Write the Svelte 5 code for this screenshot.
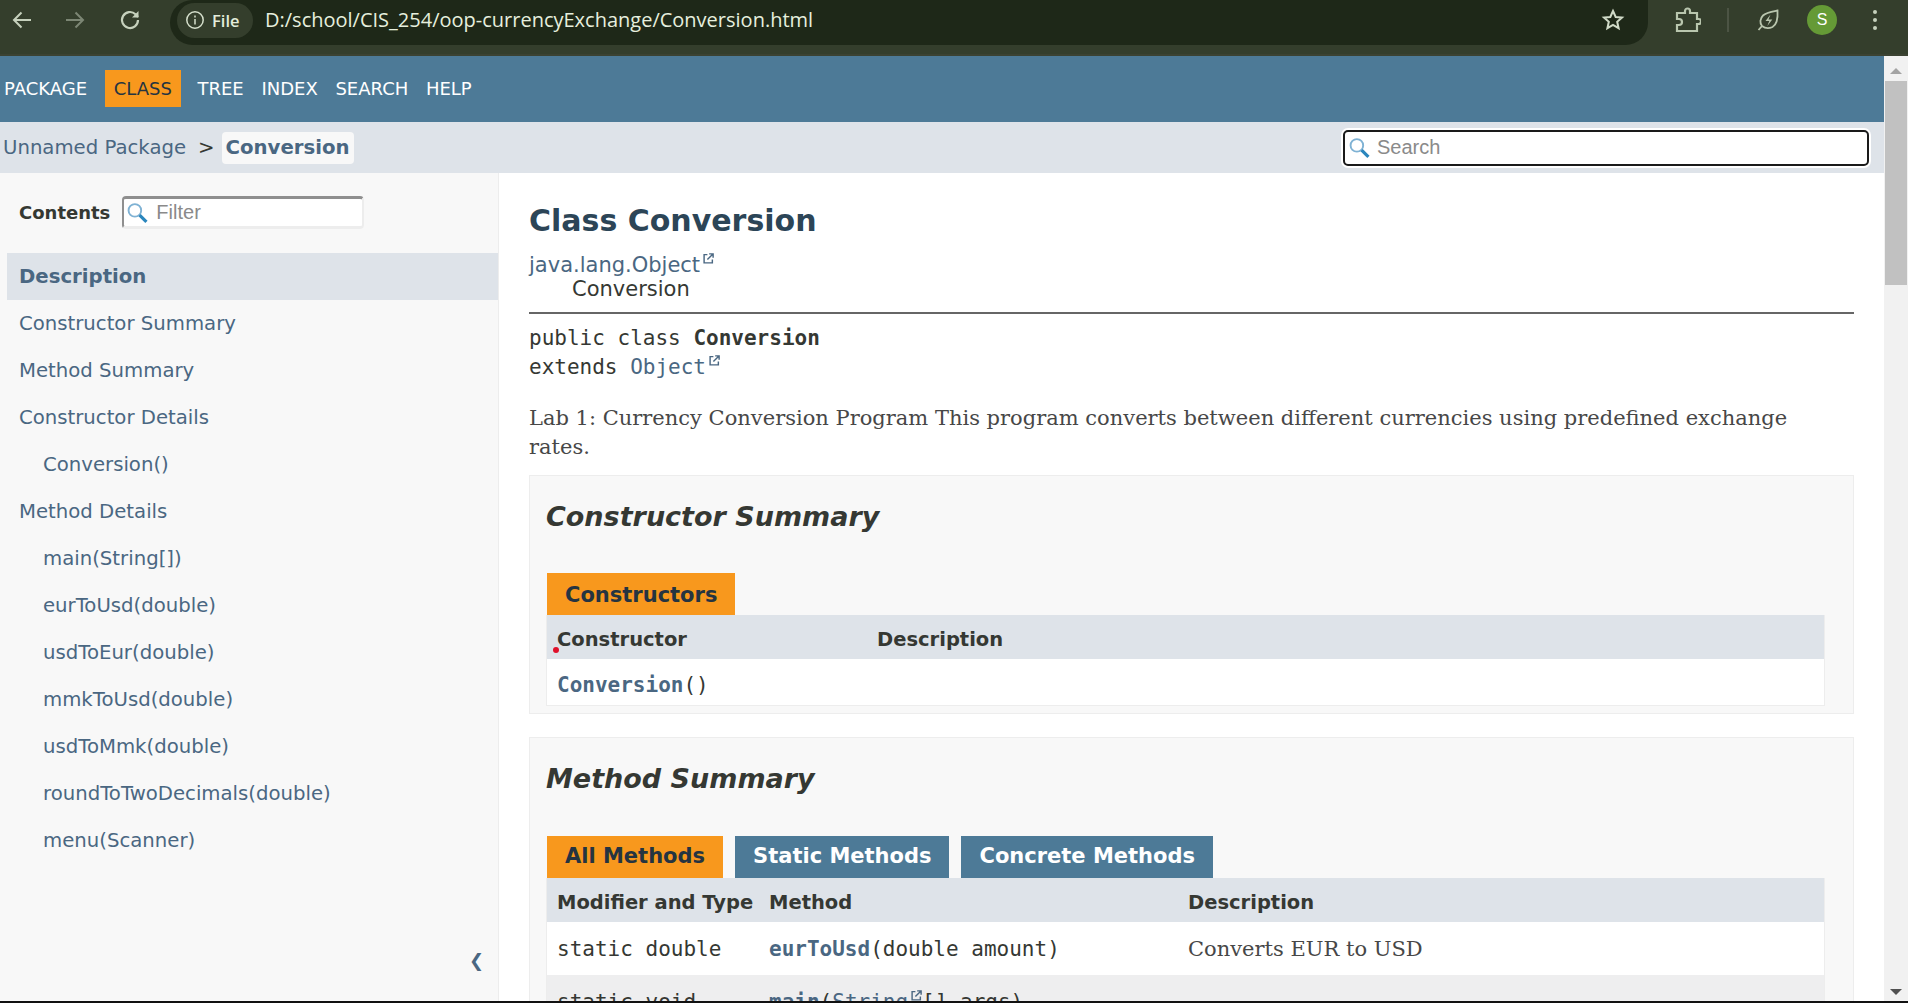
<script>
  const navItems = ['PACKAGE', 'CLASS', 'TREE', 'INDEX', 'SEARCH', 'HELP'];
  const toc = [
    { label: 'Description', active: true },
    { label: 'Constructor Summary' },
    { label: 'Method Summary' },
    { label: 'Constructor Details' },
    { label: 'Conversion()', sub: true },
    { label: 'Method Details' },
    { label: 'main(String[])', sub: true },
    { label: 'eurToUsd(double)', sub: true },
    { label: 'usdToEur(double)', sub: true },
    { label: 'mmkToUsd(double)', sub: true },
    { label: 'usdToMmk(double)', sub: true },
    { label: 'roundToTwoDecimals(double)', sub: true },
    { label: 'menu(Scanner)', sub: true },
  ];
</script>

{#snippet glass()}
  <svg class="glass" viewBox="0 0 20 20" width="21" height="21" fill="none">
    <circle cx="7.500" cy="7.500" r="6" stroke="#7fb2d4" stroke-width="1.800" fill="#fff" />
    <path d="M12 12l6.500 6.500" stroke="#2a86bd" stroke-width="3" />
  </svg>
{/snippet}

{#snippet ext()}
  <svg class="ext" viewBox="0 0 10 10" width="11" height="11" fill="none" stroke="#4a6782" stroke-width="1.300">
    <path d="M4 1.500H1v7.500h7.500V6" />
    <path d="M4 6l4.600-4.600M5.600 .8h3.600v3.600" />
  </svg>
{/snippet}

<div class="shot">
  <header class="chrome">
    <div class="chrome-nav">
      <svg viewBox="0 0 24 24" width="24" height="24" fill="none" stroke="#c6d1bd" stroke-width="2"><path d="M21 12H4.500M11.500 4.500L4 12l7.500 7.500" /></svg>
      <svg viewBox="0 0 24 24" width="24" height="24" fill="none" stroke="#7c8674" stroke-width="2"><path d="M3 12h16.500M12.500 4.500L20 12l-7.500 7.500" /></svg>
      <svg class="reload" viewBox="0 0 24 24" width="24" height="24" fill="none" stroke="#c6d1bd" stroke-width="2.200"><path d="M20 12a8 8 0 1 1-2.500-5.800L20 9" /><path d="M20.500 3V9.500H14" fill="#c6d1bd" stroke="none" /></svg>
    </div>
    <div class="omnibox">
      <div class="chip">
        <svg viewBox="0 0 20 20" width="20" height="20" fill="none" stroke="#d5dfcc" stroke-width="1.500"><circle cx="10" cy="10" r="8.200" /><path d="M10 9v5.500M10 5.400v2" /></svg>
        <span>File</span>
      </div>
      <span class="url">D:/school/CIS_254/oop-currencyExchange/Conversion.html</span>
      <svg class="star" viewBox="0 0 24 24" width="24" height="24" fill="none" stroke="#d0dac7" stroke-width="2"><path d="M12 3l2.700 6 6.300.6-4.800 4.200 1.400 6.400L12 16.900l-5.600 3.300 1.400-6.400L3 9.600 9.300 9z" /></svg>
    </div>
    <div class="chrome-tools">
      <svg viewBox="0 0 26 28" width="26" height="28" fill="none" stroke="#b9c6ae" stroke-width="2.200"><path d="M2 7h8V5a2.500 2.500 0 0 1 5 0v2h7v6h1.500a2.500 2.500 0 0 1 0 5H22v7H2v-6h2a3 3 0 0 0 0-6H2z" /></svg>
      <span class="tool-sep"></span>
      <svg class="leaf" viewBox="0 0 24 24" width="24" height="24" fill="none" stroke="#b9c6ae" stroke-width="1.800"><path d="M21.500 2.500c.5 7.500 0 13.500-5 16.500-4 2-8 1-10.500-1-2.500-3-2-7.500 1-10.500 3-3 9.500-4 14.500-5zM2.500 22l3.500-4" /><path d="M14.500 6.500l-5 6.500h3.800l-2 5 5-6.500h-3.800z" fill="#b9c6ae" stroke="none" /></svg>
      <span class="avatar">S</span>
      <svg class="dots" viewBox="0 0 6 24" width="6" height="24" fill="#c6d1bd"><circle cx="3" cy="4" r="2" /><circle cx="3" cy="12" r="2" /><circle cx="3" cy="20" r="2" /></svg>
    </div>
  </header>

  <div class="viewport">
    <div class="page">
      <nav class="topnav">
        {#each navItems as item}
          <span class:current={item === 'CLASS'}>{item}</span>
        {/each}
      </nav>

      <div class="subnav">
        <div class="crumbs">
          <span class="crumb">Unnamed Package</span>
          <span class="crumb-sep">&gt;</span>
          <span class="crumb-current">Conversion</span>
        </div>
        <div class="search-wrap">
          {@render glass()}
          <input class="search" placeholder="Search" />
        </div>
      </div>

      <div class="body">
        <aside class="sidebar">
          <div class="contents-head">
            <b>Contents</b>
            <div class="filter-wrap">
              {@render glass()}
              <input class="filter" placeholder="Filter" />
            </div>
          </div>
          <ul class="toc">
            {#each toc as row}
              <li class:active={row.active} class:sub={row.sub}>{row.label}</li>
            {/each}
          </ul>
          <span class="collapse">❮</span>
        </aside>

        <main class="main">
          <h1>Class Conversion</h1>
          <div class="inherit">
            <div><span class="link">java.lang.Object</span>{@render ext()}</div>
            <div class="inherit-child">Conversion</div>
          </div>
          <hr />
          <div class="sig">
            <div>public class <b>Conversion</b></div>
            <div>extends <span class="link">Object</span>{@render ext()}</div>
          </div>
          <p class="lede">Lab 1: Currency Conversion Program This program converts between different currencies using predefined exchange rates.</p>

          <section class="summary ctor">
            <h2>Constructor Summary</h2>
            <div class="tabs">
              <span class="tab on">Constructors</span>
            </div>
            <div class="table">
              <div class="row head ctor-cols">
                <span>Constructor</span>
                <span>Description</span>
              </div>
              <div class="row ctor-cols">
                <code><b class="link">Conversion</b>()</code>
                <span></span>
              </div>
            </div>
            <i class="red-dot"></i>
          </section>

          <section class="summary methods">
            <h2>Method Summary</h2>
            <div class="tabs">
              <span class="tab on">All Methods</span>
              <span class="tab">Static Methods</span>
              <span class="tab">Concrete Methods</span>
            </div>
            <div class="table">
              <div class="row head method-cols">
                <span>Modifier and Type</span>
                <span>Method</span>
                <span>Description</span>
              </div>
              <div class="row tall method-cols">
                <code>static double</code>
                <code><b class="link">eurToUsd</b>(double amount)</code>
                <span class="desc">Converts EUR to USD</span>
              </div>
              <div class="row tall alt method-cols">
                <code>static void</code>
                <code><b class="link">main</b>(<span class="link">String</span>{@render ext()}[] args)</code>
                <span class="desc"></span>
              </div>
            </div>
          </section>
        </main>
      </div>
    </div>

    <div class="scrollbar">
      <span class="arrow up"></span>
      <span class="thumb"></span>
      <span class="arrow down"></span>
    </div>
  </div>
  <div class="edge"></div>
</div>

<style>
  :global(body) {
    margin: 0;
    background: #fff;
  }

  .shot {
    width: 1908px;
    height: 1003px;
    display: flex;
    flex-direction: column;
    overflow: hidden;
    font-family: "DejaVu Sans", sans-serif;
    font-size: 21px;
    color: #353833;
  }

  /* browser toolbar */
  .chrome {
    height: 54px;
    flex: none;
    display: flex;
    align-items: flex-start;
    background: #343e2c;
    border-bottom: 2px solid #3b4232;
  }
  .chrome-nav {
    display: flex;
    gap: 29px;
    padding: 8px 0 0 10px;
    width: 170px;
    box-sizing: border-box;
  }
  .reload {
    margin-left: 2px;
  }
  .omnibox {
    width: 1478px;
    height: 45px;
    background: #1e2818;
    border-radius: 24px;
    border-top-right-radius: 0;
    display: flex;
    align-items: center;
    padding: 0 0 5px 7px;
    box-sizing: border-box;
    position: relative;
    color: #e3ecda;
  }
  .chip {
    display: flex;
    align-items: center;
    gap: 7px;
    height: 35px;
    width: 76px;
    padding-left: 8px;
    box-sizing: border-box;
    background: #343e2c;
    border-radius: 18px;
    font: 600 16.500px "Open Sans", sans-serif;
    color: #e3ecda;
  }
  .url {
    margin: 0 0 2px 12px;
    font: 20px "Open Sans", sans-serif;
    color: #e6efde;
  }
  .star {
    position: absolute;
    right: 23px;
    top: 8px;
  }
  .chrome-tools {
    display: flex;
    align-items: center;
    height: 40px;
    padding-left: 27px;
  }
  .tool-sep {
    width: 2px;
    height: 24px;
    margin: 0 27px 0 26px;
    background: #4c5444;
  }
  .avatar {
    width: 30px;
    height: 30px;
    margin-left: 27px;
    border-radius: 50%;
    background: #659a36;
    color: #fff;
    display: flex;
    align-items: center;
    justify-content: center;
    font: 16px "Liberation Sans", sans-serif;
  }
  .dots {
    margin-left: 35px;
  }

  .viewport {
    flex: 1;
    min-height: 0;
    display: flex;
  }
  .page {
    flex: 1;
    min-width: 0;
    display: flex;
    flex-direction: column;
  }

  /* javadoc nav */
  .topnav {
    height: 66px;
    flex: none;
    display: flex;
    align-items: center;
    background: #4d7a97;
    color: #fff;
    font-size: 18px;
    padding: 0 0 2px 4px;
    box-sizing: border-box;
  }
  .topnav span {
    margin-right: 17.700px;
  }
  .topnav .current {
    background: #f8981d;
    color: #253441;
    padding: 8px 9px;
    margin: 0 16.500px 0 0;
  }

  .subnav {
    height: 51px;
    flex: none;
    display: flex;
    align-items: center;
    justify-content: space-between;
    background: #dee3e9;
    padding: 0 14px 0 3px;
    font-size: 19.700px;
  }
  .crumbs {
    display: flex;
    align-items: center;
  }
  .crumb {
    color: #4a6782;
  }
  .crumb-sep {
    margin: 0 7px 0 12px;
    color: #353833;
  }
  .crumb-current {
    color: #4a6782;
    font-weight: 700;
    background: #f8f8f8;
    border-radius: 4px;
    padding: 0 4px;
    height: 32px;
    line-height: 32px;
  }

  .search-wrap,
  .filter-wrap {
    position: relative;
    display: flex;
  }
  .glass {
    position: absolute;
    left: 7px;
    top: 50%;
    transform: translateY(-50%);
    z-index: 1;
  }
  .filter-wrap .glass {
    left: 5px;
  }
  input {
    box-sizing: border-box;
    background: transparent;
    font-family: "Liberation Sans", sans-serif;
    outline: none;
  }
  input::placeholder {
    color: #8a8a8a;
  }
  .search {
    width: 528px;
    height: 38px;
    padding: 0 0 0 32px;
    font-size: 20px;
    border: 3px solid #1a1a1a;
    border-radius: 6px;
    outline: 2px solid #fff;
    outline-offset: -1px;
    background: none;
  }
  .search-wrap {
    background: #fff;
    border-radius: 6px;
  }

  .body {
    flex: 1;
    min-height: 0;
    display: flex;
  }

  /* sidebar */
  .sidebar {
    width: 499px;
    flex: none;
    box-sizing: border-box;
    position: relative;
    background: #f8f8f8;
    border-right: 1px solid #ededed;
    padding-left: 7px;
    font-size: 19.700px;
  }
  .contents-head {
    height: 80px;
    display: flex;
    align-items: flex-start;
    padding: 23px 0 0 12px;
    box-sizing: border-box;
  }
  .contents-head b {
    font-size: 18px;
    line-height: 34px;
    color: #353833;
    margin-right: 12px;
  }
  .filter-wrap {
    background: #fff;
    border-radius: 4px;
  }
  .filter {
    width: 242px;
    height: 33px;
    padding-left: 32px;
    font-size: 20px;
    border-style: solid;
    border-width: 3px 2px 3px 2px;
    border-color: #8f8f8f #ededed #ededed #8f8f8f;
    border-radius: 4px;
  }
  .toc {
    list-style: none;
    margin: 0;
    padding: 0;
  }
  .toc li {
    height: 47px;
    line-height: 47px;
    padding-left: 12px;
    color: #4a6782;
  }
  .toc li.sub {
    padding-left: 36px;
  }
  .toc li.active {
    background: #dee3e9;
    font-weight: 700;
  }
  .collapse {
    position: absolute;
    left: 469px;
    bottom: 30px;
    font-size: 18px;
    color: #4a6782;
  }

  /* content */
  .main {
    flex: 1;
    min-width: 0;
    padding: 0 30px;
    overflow: hidden;
  }
  h1 {
    margin: 0;
    padding-top: 28px;
    font-size: 30px;
    line-height: 40px;
    font-weight: 700;
    color: #2c4557;
  }
  .link {
    color: #4a6782;
  }
  .ext {
    vertical-align: 8px;
    margin-left: 3px;
  }
  .inherit {
    margin-top: 12px;
    line-height: 24px;
  }
  .inherit-child {
    padding-left: 43px;
  }
  hr {
    margin: 11px 0 0;
    border: 0;
    height: 2px;
    background: #666;
  }
  code,
  .sig {
    font-family: "DejaVu Sans Mono", monospace;
    font-size: 21px;
  }
  .sig {
    margin-top: 10px;
    line-height: 29px;
    color: #353833;
  }
  .lede {
    margin: 22px 0 13px;
    font-family: "DejaVu Serif", serif;
    font-size: 21px;
    line-height: 29px;
    color: #474747;
  }
  .summary {
    position: relative;
    box-sizing: border-box;
    background: #f8f8f8;
    border: 1px solid #ededed;
    padding: 0 28px 7px 16px;
    margin-bottom: 23px;
  }
  h2 {
    margin: 0;
    padding-top: 22px;
    font-size: 27px;
    line-height: 38px;
    font-style: italic;
    font-weight: 700;
    color: #353833;
  }
  .tabs {
    display: flex;
    gap: 12px;
    margin-top: 37px;
    padding-left: 1px;
  }
  .methods .tabs {
    margin-top: 38px;
  }
  .tab {
    height: 42px;
    padding: 0 18px;
    line-height: 40px;
    background: #4d7a97;
    color: #fff;
    font-weight: 700;
    font-size: 21px;
  }
  .ctor .tab {
    line-height: 44px;
  }
  .tab.on {
    background: #f8981d;
    color: #253441;
  }
  .table {
    border: 1px solid #ededed;
    border-top: 0;
    background: #fff;
  }
  .row {
    display: grid;
    align-items: center;
    box-sizing: border-box;
    height: 46px;
    padding-left: 10px;
    background: #fff;
  }
  .ctor .row {
    padding-top: 5px;
  }
  .row.head {
    height: 44px;
    padding-top: 5px;
    background: #dee3e9;
    font-weight: 700;
    font-size: 19.500px;
  }
  .row.tall {
    height: 53px;
  }
  .row.alt {
    background: #eeeeef;
  }
  .ctor-cols {
    grid-template-columns: 320px 1fr;
  }
  .method-cols {
    grid-template-columns: 212px 419px 1fr;
  }
  .desc {
    font-family: "DejaVu Serif", serif;
    color: #474747;
  }
  .red-dot {
    position: absolute;
    left: 23px;
    top: 171px;
    width: 6px;
    height: 6px;
    border-radius: 50%;
    background: #e0102a;
  }

  .scrollbar {
    width: 24px;
    flex: none;
    position: relative;
    background: #f1f1f1;
  }
  .thumb {
    position: absolute;
    left: 1px;
    right: 1px;
    top: 25px;
    height: 204px;
    background: #c1c1c1;
  }
  .arrow {
    position: absolute;
    left: 6px;
    border: 6px solid transparent;
  }
  .arrow.up {
    top: 6px;
    border-bottom: 6px solid #a3a3a3;
  }
  .arrow.down {
    bottom: 0;
    border-top: 6px solid #505050;
  }

  .edge {
    height: 2px;
    flex: none;
    background: #111;
  }
</style>
